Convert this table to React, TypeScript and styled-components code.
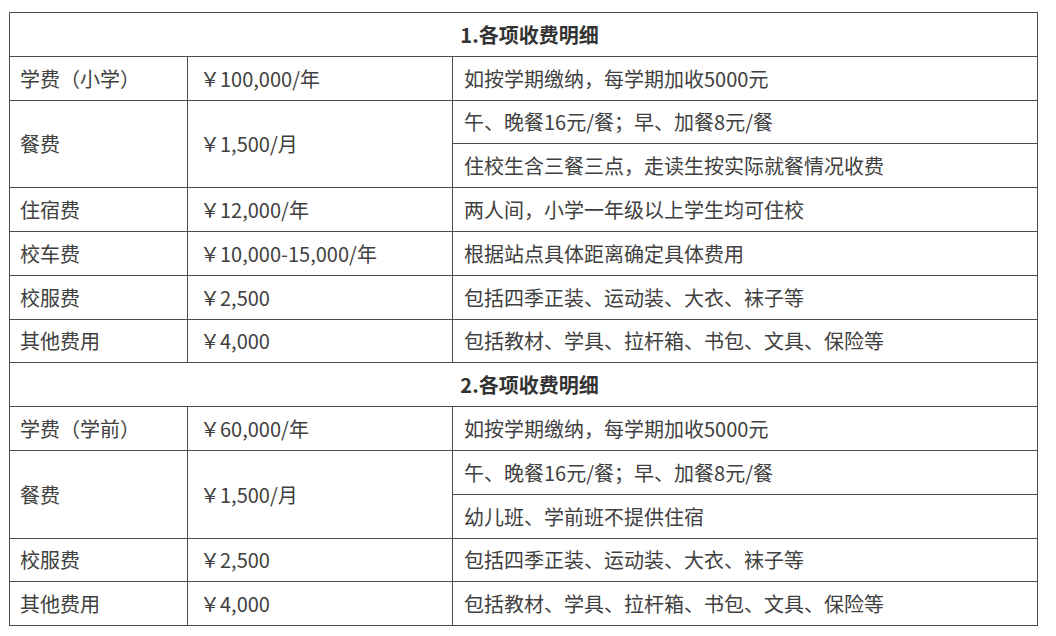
import React from "react";
import styled, { createGlobalStyle } from "styled-components";

const GlobalStyle = createGlobalStyle`
  html, body {
    margin: 0;
    padding: 0;
    background: #ffffff;
  }
`;

const Page = styled.div`
  padding: 12px 0 0 9px;
  font-family: "Noto Sans CJK SC", "Noto Sans", sans-serif;
  color: #404040;
`;

const FeeTable = styled.table`
  width: 1029px;
  border-collapse: collapse;
  table-layout: fixed;
  font-size: 20px;
  border: 1.5px solid #4d4d4d;
`;

const TitleCell = styled.td`
  height: 42.8px;
  padding: 0 0 0 12px;
  text-align: center;
  font-weight: 700;
  color: #333;
  border: 1.5px solid #4d4d4d;
`;

const Cell = styled.td<{ $pad?: number }>`
  height: 42.8px;
  padding: 0 0 0 ${(p) => p.$pad ?? 10}px;
  vertical-align: middle;
  white-space: nowrap;
  border: 1.5px solid #4d4d4d;
`;

type FeeRow = { name: string; price: string; notes: string[] };

const sections: { title: string; rows: FeeRow[] }[] = [
  {
    title: "1.各项收费明细",
    rows: [
      { name: "学费（小学）", price: "￥100,000/年", notes: ["如按学期缴纳，每学期加收5000元"] },
      {
        name: "餐费",
        price: "￥1,500/月",
        notes: ["午、晚餐16元/餐；早、加餐8元/餐", "住校生含三餐三点，走读生按实际就餐情况收费"],
      },
      { name: "住宿费", price: "￥12,000/年", notes: ["两人间，小学一年级以上学生均可住校"] },
      { name: "校车费", price: "￥10,000-15,000/年", notes: ["根据站点具体距离确定具体费用"] },
      { name: "校服费", price: "￥2,500", notes: ["包括四季正装、运动装、大衣、袜子等"] },
      { name: "其他费用", price: "￥4,000", notes: ["包括教材、学具、拉杆箱、书包、文具、保险等"] },
    ],
  },
  {
    title: "2.各项收费明细",
    rows: [
      { name: "学费（学前）", price: "￥60,000/年", notes: ["如按学期缴纳，每学期加收5000元"] },
      {
        name: "餐费",
        price: "￥1,500/月",
        notes: ["午、晚餐16元/餐；早、加餐8元/餐", "幼儿班、学前班不提供住宿"],
      },
      { name: "校服费", price: "￥2,500", notes: ["包括四季正装、运动装、大衣、袜子等"] },
      { name: "其他费用", price: "￥4,000", notes: ["包括教材、学具、拉杆箱、书包、文具、保险等"] },
    ],
  },
];

export default function App() {
  return (
    <Page>
      <GlobalStyle />
      <FeeTable>
        <colgroup>
          <col style={{ width: 178 }} />
          <col style={{ width: 265 }} />
          <col />
        </colgroup>
        <tbody>
          {sections.map((s) => (
            <React.Fragment key={s.title}>
              <tr>
                <TitleCell colSpan={3}>{s.title}</TitleCell>
              </tr>
              {s.rows.map((r) =>
                r.notes.map((note, i) => (
                  <tr key={r.name + i}>
                    {i === 0 && (
                      <>
                        <Cell rowSpan={r.notes.length}>{r.name}</Cell>
                        <Cell rowSpan={r.notes.length} $pad={12}>
                          {r.price}
                        </Cell>
                      </>
                    )}
                    <Cell $pad={11}>{note}</Cell>
                  </tr>
                ))
              )}
            </React.Fragment>
          ))}
        </tbody>
      </FeeTable>
    </Page>
  );
}
